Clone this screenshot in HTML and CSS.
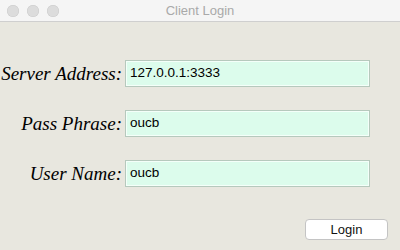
FILE: index.html
```html
<!DOCTYPE html>
<html>
<head>
<meta charset="utf-8">
<link rel="stylesheet" href="styles.css">
</head>
<body>
<div class="window">
  <div class="titlebar">
    <div class="lights">
      <span class="light"></span>
      <span class="light"></span>
      <span class="light"></span>
    </div>
    <div class="title">Client Login</div>
  </div>
  <div class="content">
    <div class="form">
      <label class="label">Server Address:</label>
      <div class="field">127.0.0.1:3333</div>
      <label class="label">Pass Phrase:</label>
      <div class="field">oucb</div>
      <label class="label">User Name:</label>
      <div class="field">oucb</div>
    </div>
    <div class="actions">
      <button class="btn">Login</button>
    </div>
  </div>
</div>
</body>
</html>
```
FILE: styles.css
```css
html, body {
  margin: 0;
  padding: 0;
  width: 400px;
  height: 250px;
  overflow: hidden;
  background: #e8e7df;
}
.window {
  width: 400px;
  height: 250px;
  display: flex;
  flex-direction: column;
  background: #e8e7df;
}
.titlebar {
  height: 21px;
  background: #f5f5f5;
  border-bottom: 1px solid #cfcfcf;
  position: relative;
  display: flex;
  align-items: center;
}
.lights {
  display: flex;
  gap: 8px;
  padding-left: 7px;
}
.light {
  width: 12px;
  height: 12px;
  border-radius: 50%;
  background: #dcdcdc;
  box-shadow: inset 0 0 0 0.5px #cacaca;
}
.title {
  position: absolute;
  left: 0;
  right: 0;
  top: 0;
  height: 21px;
  line-height: 21px;
  text-align: center;
  font-family: "Liberation Sans", Arial, sans-serif;
  font-size: 13px;
  color: #a9a9a9;
}
.content {
  flex: 1;
  display: flex;
  flex-direction: column;
  padding-top: 38px;
}
.form {
  display: grid;
  grid-template-columns: 122px 245px;
  column-gap: 3px;
  row-gap: 23px;
  align-items: center;
}
.label {
  text-align: right;
  font-family: "Liberation Serif", "Times New Roman", serif;
  font-style: italic;
  font-size: 19px;
  color: #000;
  white-space: nowrap;
}
.field {
  height: 27px;
  box-sizing: border-box;
  border: 1px solid #b6c9bd;
  box-shadow: inset 0 0 0 1px #f4fff9;
  background: #dcfcec;
  font-family: "Liberation Sans", Arial, sans-serif;
  font-size: 13.5px;
  line-height: 24px;
  padding-left: 4px;
  color: #000;
}
.actions {
  display: flex;
  justify-content: flex-end;
  padding-right: 12px;
  margin-top: 32px;
}
.btn {
  width: 83px;
  height: 21px;
  box-sizing: border-box;
  background: #fff;
  border: 1px solid #c4c4c4;
  border-radius: 4px;
  font-family: "Liberation Sans", Arial, sans-serif;
  font-size: 13px;
  color: #111;
  padding: 0;
}
```
